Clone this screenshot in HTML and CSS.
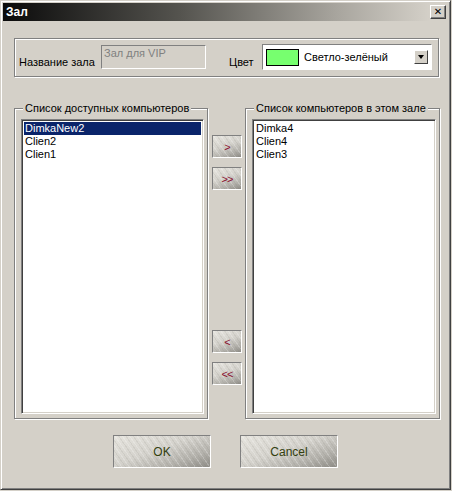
FILE: index.html
```html
<!DOCTYPE html>
<html lang="ru">
<head>
  <meta charset="UTF-8" />
  <title>Зал</title>
  <link rel="stylesheet" href="styles.css">
</head>
<body>

  <div class="window">
    <div class="titlebar">
      <span class="title">Зал</span>
      <button class="close">&#x2715;</button>
    </div>

    <div class="content">
      <div class="group top-group">
        <span class="label name-label">Название зала</span>
        <div class="field">Зал для VIP</div>
        <span class="label color-label">Цвет</span>
        <div class="combo">
          <span class="swatch"></span>
          <span class="combo-text">Светло-зелёный</span>
          <span class="combo-arrow"><span class="tri"></span></span>
        </div>
      </div>

      <div class="lists">
        <div class="group list-group">
          <div class="group-title">Список доступных компьютеров</div>
          <ul class="listbox">
            <li class="selected">DimkaNew2</li>
            <li>Clien2</li>
            <li>Clien1</li>
          </ul>
        </div>

        <div class="movers">
          <div class="pair">
            <button class="metal mover">&gt;</button>
            <button class="metal mover">&gt;&gt;</button>
          </div>
          <div class="pair">
            <button class="metal mover">&lt;</button>
            <button class="metal mover">&lt;&lt;</button>
          </div>
        </div>

        <div class="group list-group right">
          <div class="group-title">Список компьютеров в этом зале</div>
          <ul class="listbox">
            <li>Dimka4</li>
            <li>Clien4</li>
            <li>Clien3</li>
          </ul>
        </div>
      </div>

      <div class="actions">
        <button class="metal action">OK</button>
        <button class="metal action">Cancel</button>
      </div>
    </div>
  </div>

</body>
</html>
```

FILE: styles.css
```css
* {
  box-sizing: border-box;
}
body {
  margin: 0;
  background: #d4d0c8;
  font-family: 'Liberation Sans', Arial, sans-serif;
  font-size: 11px;
  color: #000;
}
.window {
  width: 451px;
  height: 490px;
  background: #d4d0c8;
  border: 1px solid;
  border-color: #d4d0c8 #404040 #404040 #d4d0c8;
  box-shadow: inset 1px 1px 0 #fff, inset -1px -1px 0 #808080;
  padding: 2px;
}
.titlebar {
  height: 18px;
  display: flex;
  align-items: center;
  justify-content: space-between;
  background: linear-gradient(to right, #0a0a0a 0%, #55544f 40%, #a8a59e 75%, #d4d0c8 96%);
  padding: 0 2px 0 3px;
}
.title {
  color: #fff;
  font-weight: bold;
  font-size: 12px;
}
.close {
  width: 16px;
  height: 14px;
  padding: 0;
  font-size: 10px;
  line-height: 10px;
  font-weight: bold;
  background: #d4d0c8;
  border: 1px solid;
  border-color: #fff #404040 #404040 #fff;
  box-shadow: inset -1px -1px 0 #808080;
  font-family: 'DejaVu Sans', sans-serif;
}
.content {
  padding: 17px 0 0 11px;
}
.group {
  border: 1px solid #808080;
  box-shadow: inset 1px 1px 0 #fff, 1px 1px 0 #fff;
}
.top-group {
  width: 425px;
  height: 39px;
  display: flex;
  align-items: flex-start;
  padding: 6px 0 0 4px;
}
.label {
  margin-top: 11px;
  white-space: nowrap;
}
.name-label {
  width: 82px;
}
.field {
  width: 105px;
  height: 24px;
  border: 1px solid;
  border-color: #808080 #fff #fff #808080;
  color: #808080;
  padding: 1px 0 0 2px;
}
.color-label {
  margin-left: 23px;
  width: 33px;
}
.combo {
  width: 170px;
  height: 26px;
  margin-top: -1px;
  background: #fff;
  border: 1px solid;
  border-color: #808080 #fff #fff #808080;
  display: flex;
  align-items: center;
  padding: 0 3px 0 3px;
}
.swatch {
  width: 33px;
  height: 17px;
  background: #77ff6f;
  border: 1px solid #000;
}
.combo-text {
  flex: 1;
  margin-left: 5px;
}
.combo-arrow {
  width: 14px;
  height: 14px;
  background: #d4d0c8;
  border: 1px solid;
  border-color: #fff #404040 #404040 #fff;
  display: flex;
  align-items: center;
  justify-content: center;
}
.tri {
  width: 0;
  height: 0;
  border-left: 3px solid transparent;
  border-right: 3px solid transparent;
  border-top: 4px solid #000;
}
.lists {
  display: flex;
  margin-top: 31px;
  height: 311px;
}
.list-group {
  width: 194px;
  height: 311px;
  padding: 0 3px 4px 6px;
  display: flex;
  flex-direction: column;
}
.list-group.right {
  width: 195px;
}
.group-title {
  align-self: flex-start;
  white-space: nowrap;
  margin: -7px 0 0 2px;
  padding: 0 2px;
  background: #d4d0c8;
  line-height: 13px;
}
.listbox {
  flex: 1;
  list-style: none;
  margin: 4px 0 0 0;
  background: #fff;
  border: 1px solid;
  border-color: #808080 #fff #fff #808080;
  box-shadow: inset 1px 1px 0 #404040, inset -1px -1px 0 #d4d0c8;
  padding: 2px 2px;
}
.listbox li {
  height: 13px;
  line-height: 13px;
  padding-left: 1px;
}
.listbox li.selected {
  background: #0a246a;
  color: #fff;
}
.movers {
  width: 30px;
  margin: 0 3px 0 4px;
  display: flex;
  flex-direction: column;
  justify-content: space-between;
  padding: 27px 0 34px;
}
.pair {
  display: flex;
  flex-direction: column;
  gap: 9px;
}
.metal {
  border: 1px solid;
  border-color: #808080 #fff #fff #808080;
  background:
    repeating-linear-gradient(55deg, rgba(255,255,255,0.22) 0 1px, transparent 1px 3px, rgba(120,118,112,0.12) 3px 4px, transparent 4px 6px),
    linear-gradient(160deg, #e6e4de 0%, #d4d2cc 45%, #b4b2ac 75%, #8e8c86 100%);
  padding: 0;
  font-family: 'Liberation Sans', Arial, sans-serif;
}
.mover {
  width: 30px;
  height: 23px;
  color: #8a1030;
  font-size: 11px;
  letter-spacing: -1px;
}
.actions {
  display: flex;
  gap: 29px;
  margin: 16px 0 0 99px;
}
.action {
  width: 98px;
  height: 33px;
  color: #334010;
  font-size: 12px;
}
```
